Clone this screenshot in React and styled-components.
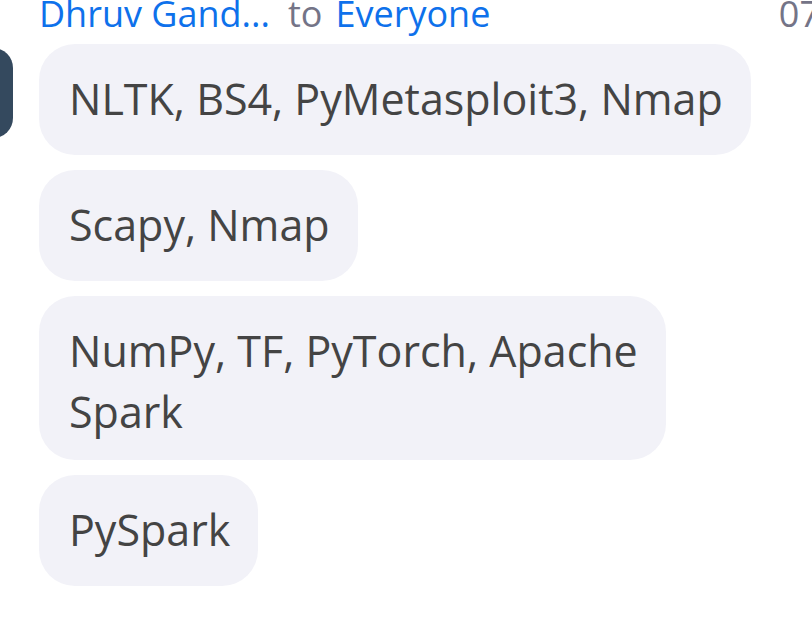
import React from 'react';
import styled, { createGlobalStyle } from 'styled-components';

const GlobalStyle = createGlobalStyle`
  * { box-sizing: border-box; }
  body {
    margin: 0;
    background: #fff;
    font-family: "Open Sans", "Noto Sans", sans-serif;
    overflow: hidden;
  }
`;

const Chat = styled.main`
  display: flex;
  gap: 26px;
  overflow: hidden;
`;

const Avatar = styled.div`
  flex: none;
  width: 90px;
  height: 90px;
  margin: 48px 0 0 -77px;
  border-radius: 20px;
  background: #34495e;
`;

const Thread = styled.section`
  flex: 1;
  min-width: 0;
`;

const Header = styled.header`
  display: flex;
  align-items: baseline;
  height: 44px;
  margin-top: -8px;
  margin-bottom: 8px;
  font-size: 36px;
  line-height: 44px;
  white-space: nowrap;
  color: #747487;
`;

const Person = styled.a`
  color: #0e71eb;
  text-decoration: none;
`;

const To = styled.span`
  margin: 0 13px 0 18px;
`;

const Time = styled.time`
  margin-left: auto;
  margin-right: -8px;
`;

const Messages = styled.ul`
  display: flex;
  flex-direction: column;
  align-items: flex-start;
  gap: 15px;
  margin: 0;
  padding: 0 56px 0 0;
  list-style: none;
`;

const Bubble = styled.li`
  padding: 24px 28px ${({ $multiline }) => ($multiline ? '18px' : '26px')} 30px;
  border-radius: 36px;
  background: #f2f2f8;
  color: #444;
  font-size: 43px;
  line-height: 61px;
`;

const messages = [
  ['NLTK, BS4, PyMetasploit3, Nmap'],
  ['Scapy, Nmap'],
  ['NumPy, TF, PyTorch, Apache', 'Spark'],
  ['PySpark'],
];

export default function App() {
  return (
    <>
      <GlobalStyle />
      <Chat>
        <Avatar />
        <Thread>
          <Header>
            <Person href="#sender">Dhruv Gand...</Person>
            <To>to</To>
            <Person href="#everyone">Everyone</Person>
            <Time>07</Time>
          </Header>
          <Messages>
            {messages.map((lines) => (
              <Bubble key={lines[0]} $multiline={lines.length > 1}>
                {lines.map((line, i) => (
                  <React.Fragment key={line}>
                    {i > 0 && <br />}
                    {line}
                  </React.Fragment>
                ))}
              </Bubble>
            ))}
          </Messages>
        </Thread>
      </Chat>
    </>
  );
}
